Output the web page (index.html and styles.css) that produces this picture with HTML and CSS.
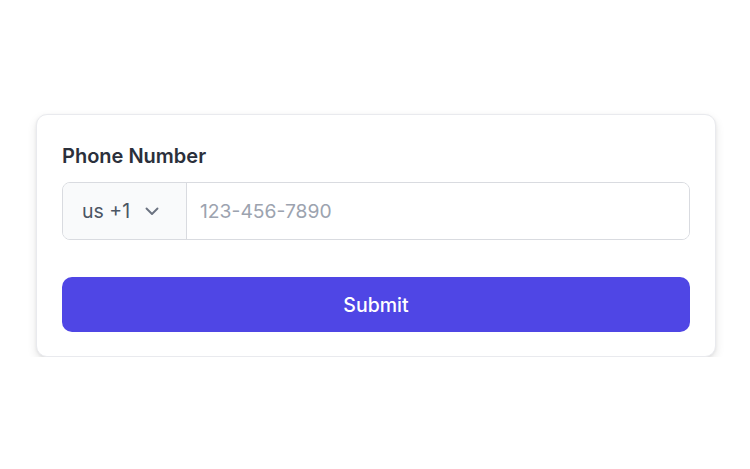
FILE: index.html
```html
<!DOCTYPE html>
<html lang="en">
<head>
<meta charset="utf-8">
<title>Phone Number</title>
<link rel="stylesheet" href="styles.css">
</head>
<body>
<form class="card">
  <label class="label" for="phone">Phone Number</label>
  <div class="field">
    <div class="country">
      <span class="code">us +1</span>
      <svg class="chev" width="16" height="16" viewBox="0 0 16 16" aria-hidden="true"><path d="M2.5 5.5 L8 11 L13.5 5.5" fill="none" stroke="#6b7280" stroke-width="1.9" stroke-linecap="round" stroke-linejoin="round"/></svg>
    </div>
    <input class="input" id="phone" type="tel" placeholder="123-456-7890">
  </div>
  <button class="submit" type="button">Submit</button>
</form>
</body>
</html>
```
FILE: styles.css
```css
html, body {
  margin: 0;
  background: #ffffff;
}
body {
  font-family: Inter, "Noto Sans", "Liberation Sans", sans-serif;
  padding: 114px 0 0 36px;
}
.card {
  box-sizing: border-box;
  width: 680px;
  height: 243px;
  padding: 24px 25px 24px 25px;
  border: 1px solid #e9eaee;
  border-radius: 11px;
  background: #fff;
  box-shadow: 0 4px 10px rgba(0,0,0,0.10), 0 1px 3px rgba(0,0,0,0.06);
  display: flex;
  flex-direction: column;
}
.label {
  font-size: 20px;
  font-weight: 600;
  color: #2b303b;
  line-height: 34px;
  height: 34px;
  margin-bottom: 9px;
}
.field {
  box-sizing: border-box;
  display: flex;
  height: 58px;
  border: 1px solid #d9dbe0;
  border-radius: 8px;
  overflow: hidden;
}
.country {
  box-sizing: border-box;
  width: 124px;
  background: #f9fafb;
  border-right: 1px solid #d9dbe0;
  display: flex;
  align-items: center;
  padding-left: 19px;
  gap: 14px;
}
.code {
  font-size: 19.5px;
  color: #4b5563;
}
.chev {
  display: block;
}
.input {
  flex: 1;
  border: none;
  outline: none;
  padding: 0 0 0 13px;
  font-family: inherit;
  font-size: 19.3px;
  color: #111827;
  background: #fff;
}
.input::placeholder {
  color: #9ca3af;
}
.submit {
  margin-top: 37px;
  height: 55px;
  border: none;
  border-radius: 10px;
  background: #4f46e5;
  color: #fff;
  font-family: inherit;
  font-size: 19.5px;
  font-weight: 500;
}
```
